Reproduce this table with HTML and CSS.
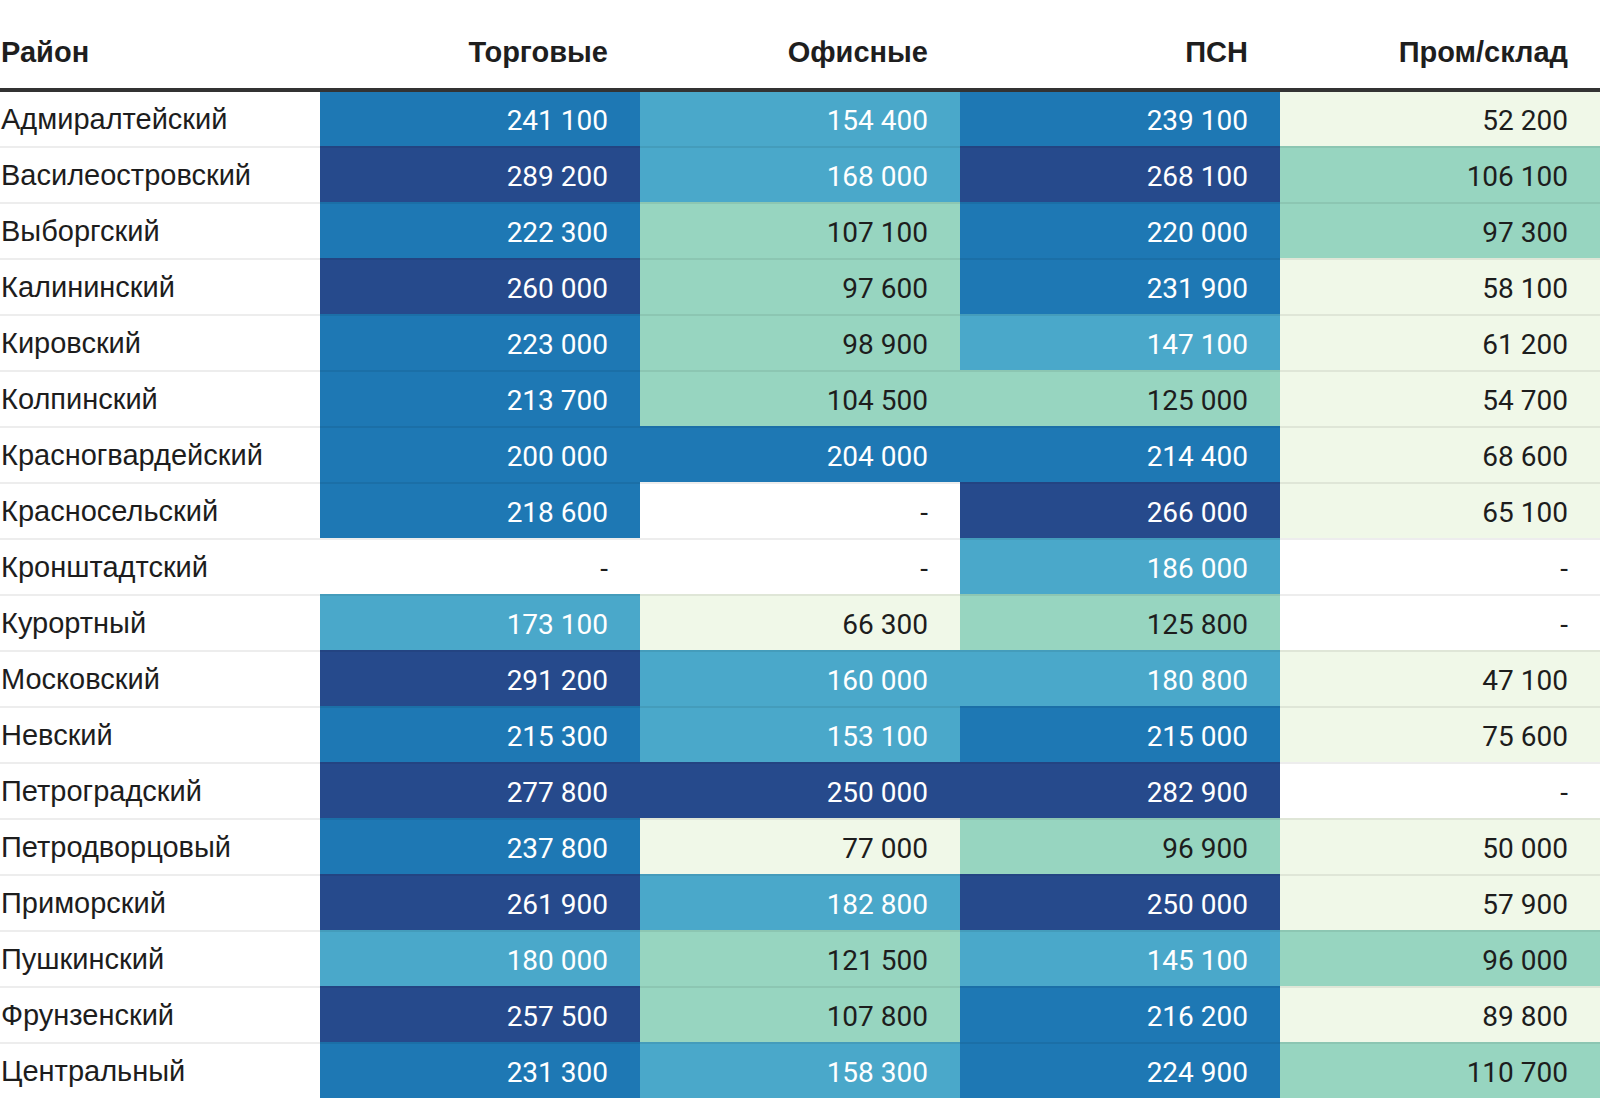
FILE: index.html
```html
<!DOCTYPE html>
<html lang="ru">
<head>
<meta charset="utf-8">
<title>Ставки аренды по районам</title>
<link rel="stylesheet" href="styles.css">
</head>
<body>
<table class="heat">
  <thead>
    <tr>
      <th class="name">Район</th>
      <th>Торговые</th>
      <th>Офисные</th>
      <th>ПСН</th>
      <th>Пром/склад</th>
    </tr>
  </thead>
  <tbody>
    <tr><td class="name">Адмиралтейский</td><td class="c4">241 100</td><td class="c3">154 400</td><td class="c4">239 100</td><td class="c1">52 200</td></tr>
    <tr><td class="name">Василеостровский</td><td class="c5">289 200</td><td class="c3">168 000</td><td class="c5">268 100</td><td class="c2">106 100</td></tr>
    <tr><td class="name">Выборгский</td><td class="c4">222 300</td><td class="c2">107 100</td><td class="c4">220 000</td><td class="c2">97 300</td></tr>
    <tr><td class="name">Калининский</td><td class="c5">260 000</td><td class="c2">97 600</td><td class="c4">231 900</td><td class="c1">58 100</td></tr>
    <tr><td class="name">Кировский</td><td class="c4">223 000</td><td class="c2">98 900</td><td class="c3">147 100</td><td class="c1">61 200</td></tr>
    <tr><td class="name">Колпинский</td><td class="c4">213 700</td><td class="c2">104 500</td><td class="c2">125 000</td><td class="c1">54 700</td></tr>
    <tr><td class="name">Красногвардейский</td><td class="c4">200 000</td><td class="c4">204 000</td><td class="c4">214 400</td><td class="c1">68 600</td></tr>
    <tr><td class="name">Красносельский</td><td class="c4">218 600</td><td class="c0">-</td><td class="c5">266 000</td><td class="c1">65 100</td></tr>
    <tr><td class="name">Кронштадтский</td><td class="c0">-</td><td class="c0">-</td><td class="c3">186 000</td><td class="c0">-</td></tr>
    <tr><td class="name">Курортный</td><td class="c3">173 100</td><td class="c1">66 300</td><td class="c2">125 800</td><td class="c0">-</td></tr>
    <tr><td class="name">Московский</td><td class="c5">291 200</td><td class="c3">160 000</td><td class="c3">180 800</td><td class="c1">47 100</td></tr>
    <tr><td class="name">Невский</td><td class="c4">215 300</td><td class="c3">153 100</td><td class="c4">215 000</td><td class="c1">75 600</td></tr>
    <tr><td class="name">Петроградский</td><td class="c5">277 800</td><td class="c5">250 000</td><td class="c5">282 900</td><td class="c0">-</td></tr>
    <tr><td class="name">Петродворцовый</td><td class="c4">237 800</td><td class="c1">77 000</td><td class="c2">96 900</td><td class="c1">50 000</td></tr>
    <tr><td class="name">Приморский</td><td class="c5">261 900</td><td class="c3">182 800</td><td class="c5">250 000</td><td class="c1">57 900</td></tr>
    <tr><td class="name">Пушкинский</td><td class="c3">180 000</td><td class="c2">121 500</td><td class="c3">145 100</td><td class="c2">96 000</td></tr>
    <tr><td class="name">Фрунзенский</td><td class="c5">257 500</td><td class="c2">107 800</td><td class="c4">216 200</td><td class="c1">89 800</td></tr>
    <tr><td class="name">Центральный</td><td class="c4">231 300</td><td class="c3">158 300</td><td class="c4">224 900</td><td class="c2">110 700</td></tr>
  </tbody>
</table>
</body>
</html>
```

FILE: styles.css
```css
html, body {
  margin: 0;
  padding: 0;
  background: #ffffff;
}

.heat {
  width: 1600px;
  table-layout: fixed;
  border-collapse: separate;
  border-spacing: 0;
}

.heat th {
  box-sizing: border-box;
  height: 92px;
  padding: 0 32px 19px 0;
  vertical-align: bottom;
  text-align: right;
  font-family: "Liberation Sans", Arial, sans-serif;
  font-weight: 700;
  font-size: 29px;
  line-height: 34px;
  color: #1e1e1e;
  border-bottom: 4px solid #333333;
}

.heat th.name {
  text-align: left;
  padding-left: 1px;
}

.heat td {
  box-sizing: border-box;
  height: 56px;
  padding: 4px 32px 0 0;
  vertical-align: middle;
  text-align: right;
  font-family: Roboto, "Liberation Sans", sans-serif;
  font-size: 28px;
  line-height: 32px;
  color: #1d1d1d;
  border-top: 2px solid rgba(0, 0, 0, 0.07);
  white-space: nowrap;
}

.heat tbody tr:first-child td {
  border-top: 0;
  height: 54px;
}

.heat td.name {
  text-align: left;
  padding: 0 0 0 1px;
  font-family: "Liberation Sans", Arial, sans-serif;
  font-size: 29px;
  color: #1d1d1d;
}

.c0 { background: #ffffff; }
.c1 { background: #f0f8e8; }
.c2 { background: #97d5c0; }
.c3 { background: #4aa8ca; color: #ffffff !important; }
.c4 { background: #1e78b4; color: #ffffff !important; }
.c5 { background: #264a8c; color: #ffffff !important; }
```
